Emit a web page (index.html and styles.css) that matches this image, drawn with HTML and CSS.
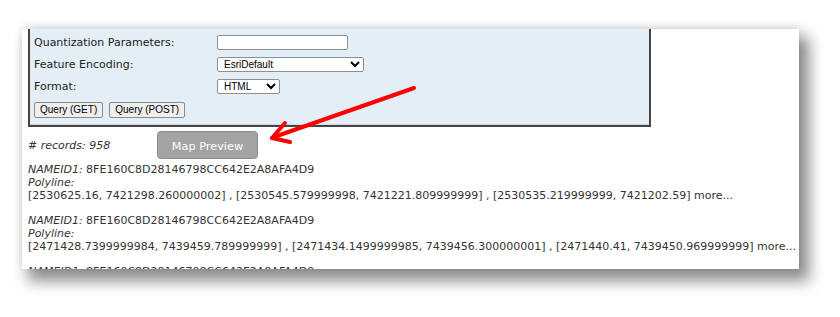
FILE: index.html
```html
<!DOCTYPE html>
<html>
<head>
<meta charset="utf-8">
<link rel="stylesheet" href="styles.css">
</head>
<body>
<div class="shot">
  <div class="panel">
    <div class="row"><span class="label">Quantization Parameters:</span><input class="text" type="text"></div>
    <div class="row"><span class="label">Feature Encoding:</span><select class="sel sel-wide"><option>EsriDefault</option></select></div>
    <div class="row"><span class="label">Format:</span><select class="sel sel-narrow"><option>HTML</option></select></div>
    <div class="btnrow"><button class="qbtn">Query (GET)</button><button class="qbtn">Query (POST)</button></div>
  </div>
  <div class="content">
    <div class="records"><span class="count"># records: 958</span><button class="preview">Map Preview</button></div>
    <div class="rec"><i>NAMEID1:</i> 8FE160C8D28146798CC642E2A8AFA4D9<br><i>Polyline:</i><br>[2530625.16, 7421298.260000002] , [2530545.579999998, 7421221.809999999] , [2530535.219999999, 7421202.59] more...</div>
    <div class="rec"><i>NAMEID1:</i> 8FE160C8D28146798CC642E2A8AFA4D9<br><i>Polyline:</i><br>[2471428.7399999984, 7439459.789999999] , [2471434.1499999985, 7439456.300000001] , [2471440.41, 7439450.969999999] more...</div>
    <div class="rec"><i>NAMEID1:</i> 8FE160C8D28146798CC642E2A8AFA4D9</div>
  </div>
</div>
<svg class="arrow" width="840" height="317" viewBox="0 0 840 317">
  <g stroke="#ff0000" stroke-width="4" stroke-linecap="round" fill="none">
    <line x1="414" y1="88" x2="274" y2="137"/>
    <line x1="272" y1="138" x2="285" y2="123"/>
    <line x1="272" y1="138" x2="290" y2="142"/>
  </g>
</svg>
</body>
</html>
```
FILE: styles.css
```css
html, body {
  margin: 0;
  padding: 0;
  background: #ffffff;
  width: 840px;
  height: 317px;
  overflow: hidden;
}
body {
  position: relative;
  font-family: "DejaVu Sans", Verdana, sans-serif;
  font-size: 11px;
  color: #222;
}
.shot {
  margin: 29px 0 0 22px;
  width: 777px;
  height: 240px;
  background: #fff;
  overflow: hidden;
  box-shadow: 8px 10px 14px 2px rgba(0,0,0,0.45), 0 -3px 8px rgba(0,0,0,0.10);
}
.panel {
  margin-left: 6px;
  width: 611px;
  background: #e4eef7;
  border: 2px solid #444;
  border-top: none;
  padding: 2px 4px 3px 4px;
  box-shadow: inset 0 -1px 0 #cdd9e6;
}
.row {
  display: grid;
  grid-template-columns: 183px auto;
  align-items: center;
  height: 22px;
}
.label {
  color: #222;
}
.text {
  box-sizing: border-box;
  width: 131px;
  height: 15px;
  margin: 0;
  border: 1px solid #8f8f8f;
  border-radius: 2px;
  background: #fff;
  padding: 0 2px;
}
.sel {
  box-sizing: border-box;
  height: 15px;
  margin: 0;
  padding: 0 0 0 2px;
  font-family: "Liberation Sans", Arial, sans-serif;
  font-size: 10px;
  color: #000;
  border: 1px solid #8f8f8f;
  border-radius: 2px;
  background: #fff;
}
.sel-wide { width: 147px; }
.sel-narrow { width: 63px; }
.btnrow {
  display: flex;
  gap: 6px;
  align-items: center;
  height: 25px;
}
.qbtn {
  box-sizing: border-box;
  height: 16px;
  margin: 0;
  padding: 0 5px;
  font-family: "Liberation Sans", Arial, sans-serif;
  font-size: 10px;
  color: #000;
  background: #efefef;
  border: 1px solid #8a8a8a;
  border-radius: 2px;
}
.content {
  padding-left: 6px;
  color: #333;
  line-height: 13px;
}
.records {
  display: flex;
  align-items: center;
  margin-top: 4px;
  height: 28px;
}
.count {
  font-style: italic;
  white-space: nowrap;
  flex: none;
  width: 129px;
}
.preview {
  box-sizing: border-box;
  flex: none;
  width: 101px;
  height: 28px;
  padding: 3px 0 0 0;
  background: #a3a3a3;
  border: 1px solid #8c8c8c;
  border-radius: 4px;
  color: #fff;
  font-family: "DejaVu Sans", Verdana, sans-serif;
  font-size: 11.3px;
}
.rec {
  margin-top: 3.5px;
  margin-bottom: 12px;
  white-space: nowrap;
}
.arrow {
  position: absolute;
  left: 0;
  top: 0;
  pointer-events: none;
}
```
